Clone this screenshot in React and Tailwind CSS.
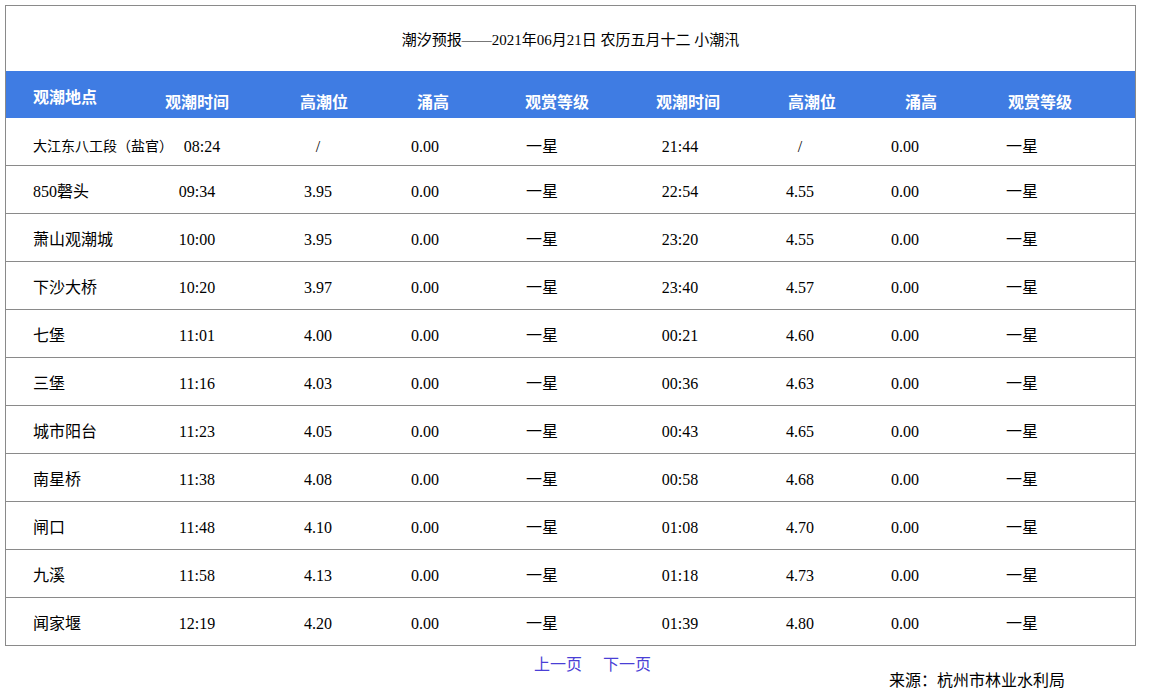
const rows = [
  ["大江东八工段（盐官）", "08:24", "/", "0.00", "一星", "21:44", "/", "0.00", "一星"],
  ["850磬头", "09:34", "3.95", "0.00", "一星", "22:54", "4.55", "0.00", "一星"],
  ["萧山观潮城", "10:00", "3.95", "0.00", "一星", "23:20", "4.55", "0.00", "一星"],
  ["下沙大桥", "10:20", "3.97", "0.00", "一星", "23:40", "4.57", "0.00", "一星"],
  ["七堡", "11:01", "4.00", "0.00", "一星", "00:21", "4.60", "0.00", "一星"],
  ["三堡", "11:16", "4.03", "0.00", "一星", "00:36", "4.63", "0.00", "一星"],
  ["城市阳台", "11:23", "4.05", "0.00", "一星", "00:43", "4.65", "0.00", "一星"],
  ["南星桥", "11:38", "4.08", "0.00", "一星", "00:58", "4.68", "0.00", "一星"],
  ["闸口", "11:48", "4.10", "0.00", "一星", "01:08", "4.70", "0.00", "一星"],
  ["九溪", "11:58", "4.13", "0.00", "一星", "01:18", "4.73", "0.00", "一星"],
  ["闻家堰", "12:19", "4.20", "0.00", "一星", "01:39", "4.80", "0.00", "一星"],
];

const dataCols = ["w-[114px]", "w-[128px]", "w-[86px]", "w-[148px]", "w-[128px]", "w-[112px]", "w-[98px]", "w-[136px]"];
const headCols = ["w-[114px]", "w-[140px]", "w-[78px]", "w-[170px]", "w-[92px]", "w-[156px]", "w-[62px]", "w-[176px]"];
const heads = ["观潮时间", "高潮位", "涌高", "观赏等级", "观潮时间", "高潮位", "涌高", "观赏等级"];

export default function App() {
  return (
    <div className="min-h-screen bg-white text-black text-[16px]" style={{ fontFamily: '"Liberation Serif", "Noto Sans CJK SC", serif' }}>
      <div className="pt-[5px] px-[5px]">
        <div className="w-[1131px] border border-[#8a8a8a]">
          <div className="h-[65px] flex items-center justify-center text-[15px] pt-1">
            潮汐预报——2021年06月21日 农历五月十二 小潮汛
          </div>
          <div className="h-[47px] bg-[#3f7ce3] text-white font-bold flex">
            <div className="w-[134px] pl-[27px] pt-[15px] whitespace-nowrap">观潮地点</div>
            {heads.map((h, i) => (
              <div key={i} className={`${headCols[i]} text-center pt-[20px]`}>{h}</div>
            ))}
          </div>
          {rows.map((r, ri) => (
            <div key={ri} className={`flex items-center ${ri === 0 ? "h-[47px] pt-[10px]" : "h-[48px] border-t border-[#8a8a8a] pt-[5px]"}`}>
              <div className={`w-[134px] pl-[27px] whitespace-nowrap ${ri === 0 ? "text-[14px]" : ""}`}>{r[0]}</div>
              {r.slice(1).map((c, ci) => (
                <div key={ci} className={`${dataCols[ci]} text-center ${ri === 0 && ci === 0 ? "pl-[10px]" : ""}`}>{c}</div>
              ))}
            </div>
          ))}
        </div>
        <div className="flex gap-[21px] pl-[529px] pt-[7px] text-[#4a3fd6]">
          <span>上一页</span>
          <span>下一页</span>
        </div>
        <div className="pl-[884px] -mt-[8px]">来源：杭州市林业水利局</div>
      </div>
    </div>
  );
}
